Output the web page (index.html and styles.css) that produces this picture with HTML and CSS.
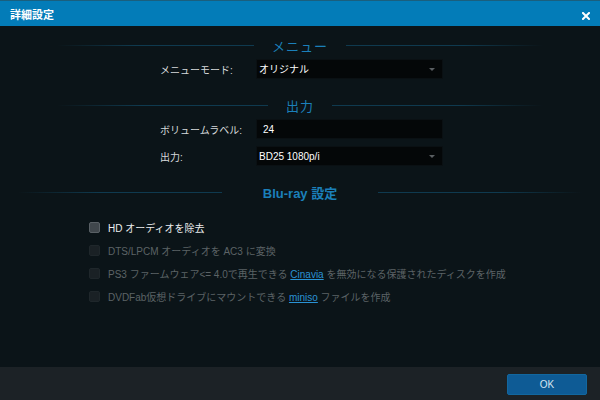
FILE: index.html
```html
<!DOCTYPE html>
<html lang="ja">
<head>
  <meta charset="UTF-8">
  <title>詳細設定</title>
  <link rel="stylesheet" href="styles.css">
</head>
<body>

  <div class="dialog">
    <div class="titlebar">
      <div class="title">詳細設定</div>
      <div class="close-btn">
        <svg width="8" height="8" viewBox="0 0 8 8">
          <path d="M1 1L7 7M7 1L1 7" stroke="#fff" stroke-width="2" stroke-linecap="square"/>
        </svg>
      </div>
    </div>

    <div class="content">
      <div class="section-head menu-head">
        <span class="line left"></span>
        <span class="head-text">メニュー</span>
        <span class="line right"></span>
      </div>

      <div class="form-row first">
        <label>メニューモード:</label>
        <div class="select">オリジナル<span class="arrow"></span></div>
      </div>

      <div class="section-head output-head">
        <span class="line left"></span>
        <span class="head-text">出力</span>
        <span class="line right"></span>
      </div>

      <div class="form-row first">
        <label>ボリュームラベル:</label>
        <div class="input">24</div>
      </div>
      <div class="form-row">
        <label>出力:</label>
        <div class="select">BD25 1080p/i<span class="arrow"></span></div>
      </div>

      <div class="section-head bluray-head">
        <span class="line left"></span>
        <span class="head-text bold">Blu-ray 設定</span>
        <span class="line right"></span>
      </div>

      <div class="checks">
        <div class="check">
          <span class="box"></span>
          <span>HD オーディオを除去</span>
        </div>
        <div class="check disabled">
          <span class="box"></span>
          <span>DTS/LPCM オーディオを AC3 に変換</span>
        </div>
        <div class="check disabled">
          <span class="box"></span>
          <span>PS3 ファームウェア&lt;= 4.0で再生できる <a href="#">Cinavia</a> を無効になる保護されたディスクを作成</span>
        </div>
        <div class="check disabled">
          <span class="box"></span>
          <span>DVDFab仮想ドライブにマウントできる <a href="#">miniso</a> ファイルを作成</span>
        </div>
      </div>
    </div>

    <div class="footer">
      <button class="ok-btn">OK</button>
    </div>
  </div>

</body>
</html>
```

FILE: styles.css
```css
:root {
  --header-blue: #037cb8;
  --bg-color: #0b1418;
  --footer-bg: #1c2226;
  --accent: #1b80ba;
  --line-color: #0f3a4f;
  --label-color: #d6d9db;
  --muted: #5c6366;
}

* { margin: 0; padding: 0; box-sizing: border-box; }

body {
  width: 600px;
  height: 400px;
  overflow: hidden;
  background-color: var(--bg-color);
  font-family: "Liberation Sans", "Noto Sans CJK JP", sans-serif;
  font-size: 10px;
  color: var(--label-color);
}

.dialog {
  display: flex;
  flex-direction: column;
  height: 400px;
}

.titlebar {
  height: 26px;
  flex-shrink: 0;
  display: flex;
  align-items: center;
  justify-content: space-between;
  background-color: var(--header-blue);
  border-top: 1px solid #1a5f7e;
  padding: 0 10px 0 10px;
}

.title {
  color: #fff;
  font-size: 11px;
  font-weight: bold;
  margin-top: 1px;
}

.close-btn {
  display: flex;
  margin-top: 4px;
}

.content {
  flex: 1;
  padding-top: 9px;
}

/* section headings with fading rules */
.section-head {
  display: flex;
  align-items: center;
  height: 20px;
  gap: 18px;
  margin: 0 57px;
}

.section-head .line {
  flex: 1;
  height: 1px;
}

.section-head .line.left {
  background: linear-gradient(to right, rgba(15, 58, 79, 0), var(--line-color) 40%);
}

.section-head .line.right {
  background: linear-gradient(to left, rgba(15, 58, 79, 0), var(--line-color) 40%);
}

.head-text {
  color: var(--accent);
  font-size: 13px;
  letter-spacing: 1px;
}

.head-text.bold {
  font-weight: bold;
  letter-spacing: 0;
}

.output-head { margin-top: 16px; }

.bluray-head {
  margin: 16px 18px 0 18px;
  gap: 41px;
}

/* form rows */
.form-row {
  display: grid;
  grid-template-columns: 96px 187px;
  align-items: center;
  margin-left: 160px;
  margin-top: 7px;
}

.form-row.first { margin-top: 4px; }

.select,
.input {
  position: relative;
  height: 20px;
  line-height: 20px;
  background-color: #040708;
  border: 1px solid #0a1013;
  color: #fff;
  padding-left: 2px;
}

.input { padding-left: 6px; }

.arrow {
  position: absolute;
  right: 7px;
  top: 8px;
  border-left: 3px solid transparent;
  border-right: 3px solid transparent;
  border-top: 3px solid #5a5f62;
}

/* checkbox list */
.checks {
  display: flex;
  flex-direction: column;
  gap: 7px;
  margin: 17px 0 0 89px;
}

.check {
  display: flex;
  align-items: center;
  gap: 8px;
  height: 16px;
  color: #eceeef;
}

.check .box {
  width: 11px;
  height: 11px;
  border-radius: 2px;
  background-color: #40474c;
  border: 1px solid #596065;
}

.check.disabled { color: var(--muted); }

.check.disabled .box {
  background-color: #1a2125;
  border-color: #1f272b;
}

.check a {
  color: #2a92d4;
  text-decoration: underline;
}

/* footer */
.footer {
  height: 33px;
  flex-shrink: 0;
  background-color: var(--footer-bg);
  display: flex;
  align-items: center;
  justify-content: flex-end;
  padding-right: 13px;
}

.ok-btn {
  width: 80px;
  height: 21px;
  margin-top: 2px;
  background-color: #0e5b95;
  border: 1px solid #12679f;
  border-radius: 2px;
  color: #d3e4f1;
  font-family: "Liberation Sans", sans-serif;
  font-size: 10px;
}
```
